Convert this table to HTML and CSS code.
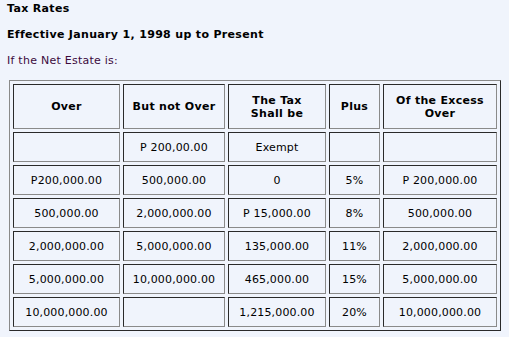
FILE: index.html
```html
<!DOCTYPE html>
<html>
<head>
<meta charset="utf-8">
<link rel="stylesheet" href="styles.css">
</head>
<body>
<div class="page">
  <p class="title">Tax Rates</p>
  <p class="title">Effective January 1, 1998 up to Present</p>
  <p class="intro">If the Net Estate is:</p>
  <table class="rates">
    <colgroup>
      <col class="c1"><col class="c2"><col class="c3"><col class="c4"><col class="c5">
    </colgroup>
    <tr class="head">
      <th>Over</th>
      <th>But not Over</th>
      <th>The Tax<br>Shall be</th>
      <th>Plus</th>
      <th>Of the Excess<br>Over</th>
    </tr>
    <tr><td></td><td>P 200,00.00</td><td>Exempt</td><td></td><td></td></tr>
    <tr><td>P200,000.00</td><td>500,000.00</td><td>0</td><td>5%</td><td>P 200,000.00</td></tr>
    <tr><td>500,000.00</td><td>2,000,000.00</td><td>P 15,000.00</td><td>8%</td><td>500,000.00</td></tr>
    <tr><td>2,000,000.00</td><td>5,000,000.00</td><td>135,000.00</td><td>11%</td><td>2,000,000.00</td></tr>
    <tr><td>5,000,000.00</td><td>10,000,000.00</td><td>465,000.00</td><td>15%</td><td>5,000,000.00</td></tr>
    <tr><td>10,000,000.00</td><td></td><td>1,215,000.00</td><td>20%</td><td>10,000,000.00</td></tr>
  </table>
</div>
</body>
</html>
```
FILE: styles.css
```css
html, body {
  margin: 0;
  padding: 0;
  background: #f0f4fc;
}
body {
  font-family: "DejaVu Sans", Verdana, sans-serif;
  font-size: 11px;
  color: #000;
}
.page {
  padding: 2px 0 0 7px;
}
p {
  margin: 0 0 13px 0;
  line-height: 13px;
}
.title {
  font-weight: bold;
  letter-spacing: 0.33px;
}
.intro {
  color: #3c0a3c;
  letter-spacing: 0.25px;
}
.rates {
  margin-left: 2px;
  border-collapse: separate;
  border-spacing: 3px;
  border-style: solid;
  border-width: 1px;
  border-color: #8a8a8a #2a2a2a #2a2a2a #8a8a8a;
  table-layout: fixed;
  width: 492px;
}
.rates col.c1 { width: 107px; }
.rates col.c2 { width: 102px; }
.rates col.c3 { width: 98px; }
.rates col.c4 { width: 51px; }
.rates col.c5 { width: 114px; }
.rates th, .rates td {
  border-style: solid;
  border-width: 1px;
  border-color: #2a2a2a #8a8a8a #8a8a8a #2a2a2a;
  padding: 0;
  text-align: center;
  vertical-align: middle;
  line-height: 13px;
  box-sizing: border-box;
  height: 30px;
  white-space: nowrap;
  letter-spacing: 0.15px;
}
.rates th {
  font-weight: bold;
  height: 45px;
  letter-spacing: 0.3px;
}
```
